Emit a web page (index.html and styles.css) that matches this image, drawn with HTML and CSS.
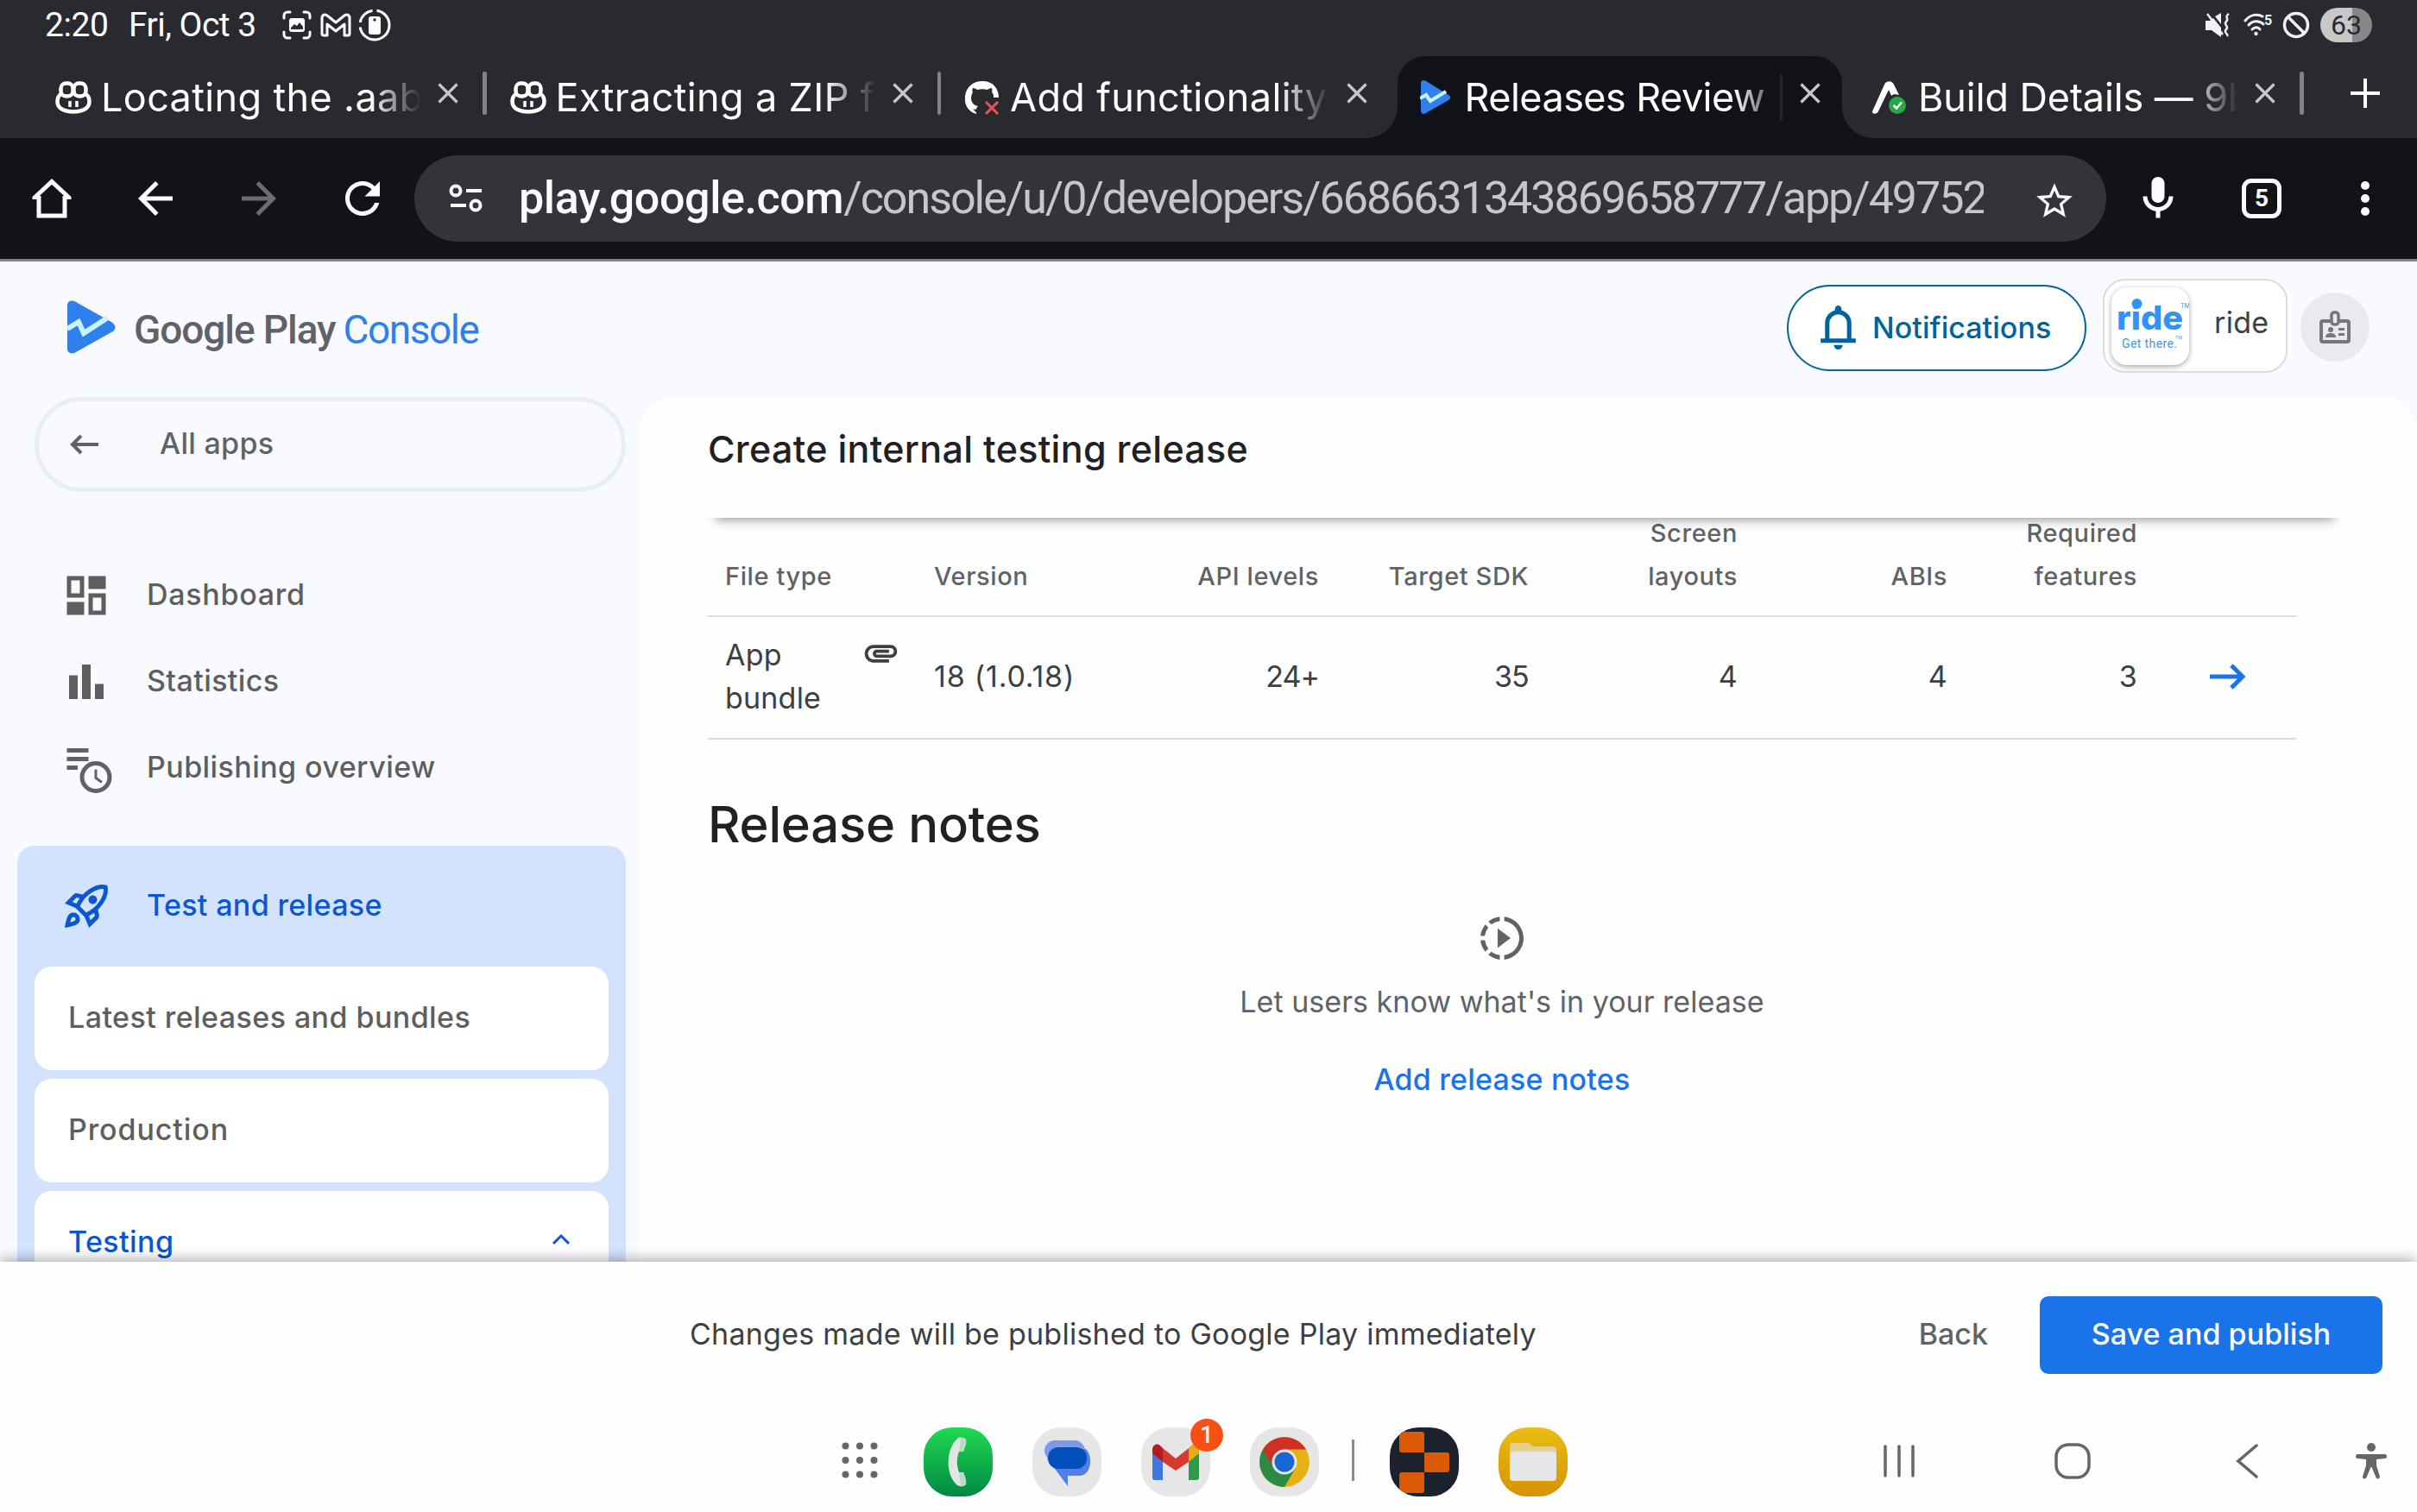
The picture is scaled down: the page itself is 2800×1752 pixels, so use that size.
FILE: index.html
```html
<!DOCTYPE html>
<html lang="en">
<head>
<meta charset="utf-8">
<title>Releases Review</title>
<link rel="stylesheet" href="styles.css">
</head>
<body>
<header class="status-bar">
  <span class="clock">2:20</span>
  <span class="date">Fri, Oct 3</span>
  <svg class="st-capture" viewBox="0 0 34 34"><g fill="none" stroke="#fff" stroke-width="3" stroke-linecap="round"><path d="M2 9V6a4 4 0 0 1 4-4h3M25 2h3a4 4 0 0 1 4 4v3M32 25v3a4 4 0 0 1-4 4h-3M9 32H6a4 4 0 0 1-4-4v-3"/></g><rect x="8" y="9" width="18" height="16" rx="3" fill="#fff"/><path d="M10 22v-2l4-4 3 2 3-4 4 5v3z" fill="#292a2f"/></svg>
  <svg class="st-mail" viewBox="0 0 36 28"><path d="M2 24V6c0-4 4-5 6-3l10 8 10-8c2-2 6-1 6 3v18q0 2-2 2h-4V13L18 21 8 13v13H4q-2 0-2-2z" fill="none" stroke="#fff" stroke-width="3" stroke-linejoin="round"/></svg>
  <svg class="st-battery" viewBox="0 0 38 38"><path d="M21.500 2.200A17 17 0 1 1 2.200 21.500M2.200 16A17 17 0 0 1 16.500 2.200" fill="none" stroke="#fff" stroke-width="3"/><rect x="12" y="9" width="14" height="21" rx="3" fill="#fff"/><circle cx="19" cy="13" r="1.700" fill="#292a2f"/></svg>
  <span class="spacer"></span>
  <svg class="st-mute" viewBox="0 0 30 30"><path d="M0 10h5l4-3 9 11v11L7 21H0zM11 5l7-4v13z" fill="#f0f0f2"/><path d="M2 2l18 24M27 2c-6 4 1 5-3 9s4 5 0 9 3 5 1 8" fill="none" stroke="#f0f0f2" stroke-width="2.500"/></svg>
  <svg class="st-wifi" viewBox="0 0 34 28"><g fill="none" stroke="#f0f0f2" stroke-width="3" stroke-linecap="round"><path d="M2 9C8 1 17 1 22 4M6 14c4-5 12-6 17-1M10 19c3-3 7-3 9 0"/></g><circle cx="14.500" cy="24" r="2.200" fill="#f0f0f2"/><text x="24" y="14" class="wifi-gen">5</text></svg>
  <svg class="st-block" viewBox="0 0 32 32"><circle cx="16" cy="16" r="13.500" fill="none" stroke="#f0f0f2" stroke-width="3.500"/><path d="M6.500 6.500l19 19" stroke="#f0f0f2" stroke-width="3.500"/></svg>
  <span class="battery">63</span>
</header>

<nav class="tab-strip">
  <div class="tab">
    <svg class="favicon" viewBox="0 0 42 42"><use href="#copilot"/></svg>
    <span class="tab-title t1">Locating the .aab</span>
    <svg class="close" viewBox="0 0 24 24"><path d="M1.500 1.500l21 21M22.500 1.500l-21 21"/></svg><i class="sep"></i>
  </div>
  <div class="tab">
    <svg class="favicon" viewBox="0 0 42 42"><use href="#copilot"/></svg>
    <span class="tab-title t2">Extracting a ZIP fi</span>
    <svg class="close" viewBox="0 0 24 24"><path d="M1.500 1.500l21 21M22.500 1.500l-21 21"/></svg><i class="sep"></i>
  </div>
  <div class="tab">
    <svg class="favicon" viewBox="0 0 42 42"><path d="M14 38.500v-4c-5 1-6-2-7-3.500M14 40C4 37 0 29 1 20 2 9 10 2 21 2c12 0 19 8 19 19h-6c0-3 0-4-2-6 1-2 0-4 0-5-2 0-4 1-5 2-4-1-8-1-12 0-1-1-3-2-5-2-1 2-1 4 0 5-4 6-2 15 6 16-1 1-2 2-2 4z" fill="#fff"/><path d="M25 26l14 14M39 26L25 40" stroke="#f0505c" stroke-width="3"/></svg>
    <span class="tab-title t3">Add functionality</span>
    <svg class="close" viewBox="0 0 24 24"><path d="M1.500 1.500l21 21M22.500 1.500l-21 21"/></svg>
  </div>
  <div class="tab active">
    <svg class="favicon" viewBox="0 0 42 42"><path d="M1 5c0-4 3-5 6-3l26 16c3 2 3 4 0 6L7 39c-3 2-6 1-6-3z" fill="#2f7fec"/><path d="M0 22l7-4 5 7L30 14" fill="none" stroke="#c7f4ff" stroke-width="4"/></svg>
    <span class="tab-title t4">Releases Review |</span>
    <svg class="close" viewBox="0 0 24 24"><path d="M1.500 1.500l21 21M22.500 1.500l-21 21"/></svg>
  </div>
  <div class="tab">
    <svg class="favicon" viewBox="0 0 42 42"><path d="M0 37L14 6c2-5 9-5 11 0l6 12c-4-1-7-1-9 1l-3-7L7 37c-2 4-8 3-7 0z" fill="#fff"/><circle cx="29" cy="30" r="10" fill="#28a745"/><path d="M24.500 30l3.500 3.500 6-7" fill="none" stroke="#fff" stroke-width="2.500"/></svg>
    <span class="tab-title t5">Build Details — 9b</span>
    <svg class="close" viewBox="0 0 24 24"><path d="M1.500 1.500l21 21M22.500 1.500l-21 21"/></svg><i class="sep"></i>
  </div>
  <svg class="new-tab" viewBox="0 0 34 34"><path d="M17 0v34M0 17h34" stroke="#fff" stroke-width="4"/></svg>
</nav>

<div class="toolbar">
  <div class="tool"><svg width="46" height="46" viewBox="0 0 46 46"><path d="M3 24v-2L23 3.500 43 22v2M8 20v23h30V20" fill="none" stroke="#fcf9ff" stroke-width="5"/></svg></div>
  <div class="tool"><svg width="60" height="60" viewBox="0 0 24 24"><path d="M20 11H7.830l5.590-5.590L12 4l-8 8 8 8 1.410-1.410L7.830 13H20z" fill="#fcf9ff"/></svg></div>
  <div class="tool"><svg width="60" height="60" viewBox="0 0 24 24"><path d="M12 4l-1.410 1.410L16.170 11H4v2h12.170l-5.580 5.590L12 20l8-8z" fill="#6c6b70"/></svg></div>
  <div class="tool"><svg width="60" height="60" viewBox="0 0 24 24"><path d="M17.650 6.350A7.960 7.960 0 0 0 12 4c-4.420 0-7.990 3.580-7.990 8s3.570 8 7.990 8c3.730 0 6.840-2.550 7.730-6h-2.080A5.990 5.990 0 0 1 12 18c-3.310 0-6-2.690-6-6s2.690-6 6-6c1.660 0 3.140.69 4.220 1.780L13 11h7V4z" fill="#fcf9ff"/></svg></div>
  <div class="omnibox">
    <svg class="tune" viewBox="0 0 40 34"><g fill="none" stroke="#fcf9ff" stroke-width="4"><circle cx="8" cy="8" r="5.500"/><circle cx="31" cy="25" r="5.500"/><path d="M20 8h18M2 25h18"/></g></svg>
    <div class="url"><span class="host">play.google.com</span><span class="path">/console/u/0/developers/6686631343869658777/app/49752</span></div>
    <svg class="star" viewBox="0 0 24 24"><path d="M22 9.240l-7.190-.62L12 2 9.190 8.630 2 9.240l5.460 4.730L5.820 21 12 17.270 18.180 21l-1.630-7.030zM12 15.400l-3.760 2.270 1-4.280-3.320-2.880 4.380-.38L12 6.100l1.710 4.040 4.380.38-3.320 2.880 1 4.280z" fill="#fcf9ff"/></svg>
  </div>
  <div class="tool"><svg width="60" height="60" viewBox="0 0 24 24"><path d="M12 14c1.660 0 3-1.340 3-3V5c0-1.660-1.340-3-3-3S9 3.340 9 5v6c0 1.660 1.340 3 3 3zm5-3c0 2.760-2.240 5-5 5s-5-2.240-5-5H5c0 3.530 2.610 6.430 6 6.920V21h2v-3.080c3.390-.49 6-3.390 6-6.920z" fill="#fcf9ff"/></svg></div>
  <div class="tool"><span class="tab-count">5</span></div>
  <div class="tool"><svg width="10" height="40" viewBox="0 0 10 40"><g fill="#fcf9ff"><circle cx="5" cy="5" r="5"/><circle cx="5" cy="20" r="5"/><circle cx="5" cy="35" r="5"/></g></svg></div>
</div>

<div class="app">
  <div class="app-header">
    <svg class="logo" viewBox="0 0 56 62"><path d="M0 6C0 1 5-1 10 2l41 23c6 4 6 9 0 12L10 60c-5 3-10 1-10-4z" fill="#2f7fec"/><path d="M0 33l13-8 6 13 28-18" fill="none" stroke="#c7f4ff" stroke-width="6"/></svg>
    <span class="brand">Google Play</span><span class="brand-sub">Console</span>
    <span class="spacer"></span>
    <button class="notifications"><svg width="61" height="61" viewBox="0 0 24 24"><path fill="#00639b" d="M4 19v-2h2v-7q0-2.075 1.250-3.690Q8.500 4.700 10.500 4.200v-.7q0-.62.440-1.060Q11.380 2 12 2t1.060.44q.44.440.44 1.060v.7q2 .5 3.250 2.110Q18 7.930 18 10v7h2v2Zm8 3q-.83 0-1.410-.59Q10 20.830 10 20h4q0 .83-.59 1.410Q12.830 22 12 22Zm-4-5h8v-7q0-1.650-1.180-2.830Q13.650 6 12 6q-1.650 0-2.830 1.170Q8 8.350 8 10Z"/></svg><span>Notifications</span></button>
    <div class="account">
      <svg class="account-logo" viewBox="0 0 90 90"><g fill="#2f93fa"><text class="ride-word" x="6" y="49" textLength="77" lengthAdjust="spacingAndGlyphs">ride</text><circle cx="29.500" cy="19" r="6"/></g><text class="ride-tm" x="80" y="24">TM</text><text class="ride-tag" x="12" y="70" textLength="64">Get there.</text><text class="ride-tm2" x="74" y="60">TM</text></svg>
      <span>ride</span>
    </div>
    <div class="avatar"><svg width="36" height="38" viewBox="0 0 36 38"><rect x="2" y="12" width="32" height="24" rx="2" fill="none" stroke="#757679" stroke-width="4"/><rect x="14" y="2" width="8" height="14" rx="3" fill="#e8eaed" stroke="#757679" stroke-width="3.500"/><circle cx="13" cy="22" r="3" fill="#757679"/><path d="M7 31q0-5 6-5t6 5zM22 20h7v3h-7zM22 26h7v3h-7z" fill="#757679"/></svg></div>
  </div>

  <div class="app-body">
    <aside class="sidebar">
      <a class="all-apps"><svg width="33" height="24" viewBox="0 0 33 24"><path d="M33 12H4M13 2L3 12l10 10" fill="none" stroke="#5f6368" stroke-width="4"/></svg><span>All apps</span></a>
      <a class="nav-item"><svg class="nav-icon" viewBox="0 0 24 24"><path fill="#5e5e5e" fill-rule="evenodd" d="M3 3h8v10H3zM5 5v6h4V5zM13 3h8v6h-8zM13 11h8v10h-8zM15 13v6h4v-6zM3 15h8v6H3z"/></svg><span class="dash">Dashboard</span></a>
      <a class="nav-item"><svg class="nav-icon" viewBox="0 0 24 24"><path fill="#5e5e5e" d="M4 9h4v11H4zm12 4h4v7h-4zM10 4h4v16h-4z"/></svg><span class="stats">Statistics</span></a>
      <a class="nav-item"><svg class="nav-icon pub" viewBox="0 0 60 60"><path fill="#5f6368" d="M7.500 5h25v5h-25zM7.500 15h25v5h-25zM7.500 25H20v5H7.500z"/><circle cx="41" cy="38.500" r="16" fill="#f9faff" stroke="#5f6368" stroke-width="5"/><path d="M41 29.500v10l7 5" fill="none" stroke="#5f6368" stroke-width="3"/></svg><span>Publishing overview</span></a>
      <section class="group">
        <div class="group-head"><svg class="nav-icon" viewBox="0 0 24 24"><path fill="#0b57d0" fill-rule="evenodd" d="M6 15c-.83 0-1.580.34-2.120.88C2.700 17.060 2 22 2 22s4.940-.7 6.120-1.880A3 3 0 0 0 6 15zm.71 3.710c-.28.28-2.170.76-2.170.76s.47-1.880.76-2.170c.17-.19.42-.3.7-.3.55 0 1 .45 1 1 0 .28-.11.53-.29.710zM17.420 13.650c6.360-6.360 4.240-11.310 4.240-11.310s-4.950-2.120-11.310 4.240l-2.490-.5c-.65-.13-1.330.08-1.810.55L2 10.690l5 2.140L11.170 17l2.140 5 4.050-4.050c.47-.47.68-1.150.55-1.810zM7.410 10.830l-1.910-.82 1.970-1.970 1.440.29c-.57.83-1.080 1.700-1.500 2.500zm6.580 7.670l-.82-1.910c.8-.42 1.670-.93 2.490-1.500l.29 1.440zM16 12.240c-1.320 1.320-3.380 2.400-4.040 2.730l-2.930-2.930c.32-.65 1.400-2.710 2.730-4.040 4.680-4.680 8.230-3.990 8.230-3.990s.69 3.550-3.990 8.230zM15 11c1.100 0 2-.9 2-2s-.9-2-2-2-2 .9-2 2 .9 2 2 2z"/></svg><span>Test and release</span></div>
        <a class="card"><span>Latest releases and bundles</span></a>
        <a class="card"><span class="prod">Production</span></a>
        <a class="card open"><span>Testing</span><svg width="22" height="14" viewBox="0 0 22 14"><path d="M2 12l9-9 9 9" fill="none" stroke="#0b57d0" stroke-width="3"/></svg></a>
      </section>
    </aside>

    <main class="main">
      <div class="main-head"><h1>Create internal testing release</h1></div>
      <div class="grid-row head">
        <div>File type</div><div>Version</div><div class="num">API levels</div><div class="num">Target SDK</div><div class="num">Screen<br>layouts</div><div class="num">ABIs</div><div class="num">Required<br>features</div><div></div>
      </div>
      <div class="grid-row">
        <div class="bundle"><span>App<br>bundle</span><svg width="45" height="45" viewBox="0 0 24 24"><path fill="#3c4043" d="M2 12.500C2 9.460 4.460 7 7.500 7H18c2.210 0 4 1.790 4 4s-1.790 4-4 4H9.500C8.120 15 7 13.880 7 12.500S8.120 10 9.500 10H17v2H9.410c-.55 0-.55 1 0 1H18c1.100 0 2-.9 2-2s-.9-2-2-2H7.500C5.570 9 4 10.570 4 12.500S5.570 16 7.500 16H17v2H7.500C4.460 18 2 15.540 2 12.500z"/></svg></div>
        <div class="ver">18 (1.0.18)</div><div class="num api">24+</div><div class="num sdk">35</div><div class="num">4</div><div class="num">4</div><div class="num">3</div>
        <div class="go"><svg width="41" height="30" viewBox="0 0 41 30"><path d="M0 15h37M25 2l13 13-13 13" fill="none" stroke="#1a73e8" stroke-width="5"/></svg></div>
      </div>
      <h2>Release notes</h2>
      <div class="empty">
        <svg width="60" height="60" viewBox="0 0 24 24"><path fill="#5f6368" d="M10 7.500v9l6-4.500zM11 4.070V2.050c-2.010.2-3.840 1-5.320 2.210L7.100 5.690A7.900 7.900 0 0 1 11 4.070zM5.690 7.100L4.260 5.680C3.050 7.160 2.250 8.990 2.050 11h2.020c.18-1.460.76-2.790 1.620-3.900zM4.070 13H2.050c.2 2.010 1 3.840 2.210 5.320l1.430-1.430A7.900 7.900 0 0 1 4.070 13zm1.610 6.740C7.160 20.950 9 21.750 11 21.950v-2.020c-1.460-.18-2.790-.76-3.900-1.620zM22 12c0 5.160-3.920 9.420-8.950 9.950v-2.020C16.970 19.410 20 16.050 20 12s-3.030-7.410-6.950-7.930V2.050C18.080 2.580 22 6.840 22 12z"/></svg>
        <p>Let users know what's in your release</p>
        <a>Add release notes</a>
      </div>
    </main>
  </div>
</div>

<footer class="action-bar">
  <p>Changes made will be published to Google Play immediately</p>
  <span class="spacer"></span>
  <a class="back">Back</a>
  <button class="publish">Save and publish</button>
</footer>

<div class="taskbar">
  <svg class="drawer" viewBox="0 0 42 42"><g fill="#666"><circle cx="4.500" cy="4.500" r="4"/><circle cx="21" cy="4.500" r="4"/><circle cx="37.500" cy="4.500" r="4"/><circle cx="4.500" cy="21" r="4"/><circle cx="21" cy="21" r="4"/><circle cx="37.500" cy="21" r="4"/><circle cx="4.500" cy="37.500" r="4"/><circle cx="21" cy="37.500" r="4"/><circle cx="37.500" cy="37.500" r="4"/></g></svg>
  <div class="dock-icon phone"><svg viewBox="0 0 80 80"><path d="M40 12c3-1 7 0 9 2 1 4-1 9-3 14h-5c-3 8-3 16 0 24h5c2 5 4 10 3 14-2 3-7 3-10 1C25 55 25 25 40 12z" fill="#e4e6e5"/><path d="M43 12c5 0 7 2 6 5l-3 11h-5zM41 52h5l3 11c1 3-2 5-6 5z" fill="#b6ddc4"/></svg></div>
  <div class="dock-icon"><svg viewBox="0 0 80 80"><path d="M26 15h23c8 0 13 8 13 16v8H30c-10 0-16-5-16-12 0-6 5-12 12-12z" fill="#7b9be6"/><path d="M62 25c8 8 7 30-7 31H41v12L17 36c6-8 30-11 45-11z" fill="#5080e8"/><rect x="18" y="23" width="45" height="25" rx="12" fill="#004fbb"/></svg></div>
  <div class="dock-icon"><svg viewBox="0 0 80 80"><path d="M13 27l12 10v24h-9q-3 0-3-3z" fill="#3f78dc"/><path d="M67 27L55 37v24h9q3 0 3-3z" fill="#309a4b"/><path d="M55 24l3-3c4-3 9 0 9 5v4L55 40z" fill="#e5ad12"/><path d="M25 24v16l15 10 15-10V24L40 36z" fill="#d33b2f"/><path d="M13 26c0-6 6-9 10-4l2 2v16L13 30z" fill="#b31c1c"/></svg><b class="badge">1</b></div>
  <div class="dock-icon"><svg viewBox="0 0 80 80"><circle cx="40" cy="40" r="29" fill="#e5b114"/><path d="M40 40L15 25.500A29 29 0 0 1 65 25.500H40z" fill="#cf3026"/><path d="M40 40v0L15 25.500A29 29 0 0 0 40 69l13-22z" fill="#2c8a44"/><path d="M15 25.500L27 46l13-20.500z" fill="#cf3026"/><circle cx="40" cy="40" r="14.500" fill="#e6e6e6"/><circle cx="40" cy="40" r="11.500" fill="#1967d2"/></svg></div>
  <i class="dock-sep"></i>
  <div class="dock-icon term"><svg viewBox="0 0 80 80"><g fill="#dc5a06"><path d="M11 9q0-4 4-4h22q3 0 3 3v21H14q-3 0-3-3zM40 29h26q3 0 3 3v17q0 3-3 3H40zM14 52h26v21q0 3-3 3H15q-4 0-4-4V55q0-3 3-3z"/></g></svg></div>
  <div class="dock-icon files"><svg viewBox="0 0 80 80"><path d="M13 22q0-4 4-4h18l5 4h23q4 0 4 4v10H13z" fill="#e5cf8c"/><rect x="13" y="28" width="54" height="34" rx="4" fill="#e6e6e6"/></svg></div>
  <span class="spacer"></span>
  <svg class="recents" viewBox="0 0 36 38"><path d="M2 2v34M18 2v34M34 2v34" stroke="#666" stroke-width="3.500" stroke-linecap="round"/></svg>
  <svg class="home" viewBox="0 0 42 42"><rect x="2" y="2" width="38" height="38" rx="14" fill="none" stroke="#666" stroke-width="3.500"/></svg>
  <svg class="nav-back" viewBox="0 0 26 40"><path d="M24 2L3 20l21 18" fill="none" stroke="#666" stroke-width="3.500" stroke-linecap="round"/></svg>
  <svg class="a11y" viewBox="0 0 36 42"><g fill="#666"><circle cx="18" cy="5" r="5"/><path d="M2.500 13h31a2.500 2.500 0 0 1 0 5L24 19v7l4 13c0 3-4 3-4.500 1L18.500 28h-1l-5 12c-1 2-5 2-4.500-1l4-13v-7l-9.500-1a2.500 2.500 0 0 1 0-5z"/></g></svg>
</div>

<svg class="defs" aria-hidden="true"><symbol id="copilot" viewBox="0 0 42 42"><g fill="none" stroke="#fff" stroke-width="4.500"><rect x="6.500" y="4.500" width="14" height="15" rx="6"/><rect x="21.500" y="4.500" width="14" height="15" rx="6"/><path d="M6.500 17c-3 2-4 5-4 9 0 8 9 11.500 18.500 11.500S39.500 34 39.500 26c0-4-1-7-4-9" /><path d="M17 25v7M25 25v7" stroke-width="3.500"/></g></symbol></svg>
</body>
</html>
```
FILE: styles.css
```css
* { box-sizing: border-box; }
body { margin: 0; width: 2800px; height: 1752px; overflow: hidden; display: flex; flex-direction: column; background: #fefefe; font-family: Inter, Roboto, sans-serif; font-size: 34px; color: #3c4043; }
svg { display: block; flex: none; }
p, h1, h2 { margin: 0; }
button { font: inherit; border: 0; }
span { white-space: nowrap; }
.spacer { flex: 1; }
.defs { position: absolute; width: 0; height: 0; }

/* Status bar */
.status-bar { height: 65px; flex: none; padding: 0 52px 8px 52px; display: flex; align-items: center; background: #292a2f; color: #fff; font: 450 39px Roboto, sans-serif; }
.clock { width: 97px; letter-spacing: -.4px; }
.date { width: 178px; letter-spacing: -.5px; }
.st-capture { width: 34px; height: 34px; margin-right: 10px; }
.st-mail { width: 36px; height: 28px; margin-right: 8px; }
.st-battery { width: 38px; height: 38px; }
.st-mute { width: 30px; height: 30px; margin-right: 14px; }
.st-wifi { width: 34px; height: 28px; margin-right: 11px; }
.wifi-gen { font: 700 16px Roboto, sans-serif; fill: #f0f0f2; }
.st-block { width: 32px; height: 32px; margin-right: 12px; }
.battery { width: 60px; height: 40px; border-radius: 20px; text-align: center; font-size: 32px; line-height: 41px; color: #292a2f; background: linear-gradient(90deg, #c8c8c8 62%, #868789 62%); }

/* Tabs */
.tab-strip { height: 95px; flex: none; padding-left: 38px; display: flex; background: #292a2f; color: #fff; }
.tab { width: 526.5px; flex: none; padding-left: 26px; display: flex; align-items: center; }
.tab.active { width: 515px; margin: 0 9.5px 0 1px; position: relative; background: #121318; border-radius: 32px 32px 0 0; }
.tab.active::before, .tab.active::after { content: ""; position: absolute; bottom: 0; width: 36px; height: 36px; }
.tab.active::before { left: -36px; background: radial-gradient(circle at 0 0, transparent 35.500px, #121318 36px); }
.tab.active::after { right: -36px; background: radial-gradient(circle at 100% 0, transparent 35.500px, #121318 36px); }
.favicon { width: 42px; height: 42px; margin-right: 11px; }
.tab-title { width: 371px; margin-right: 19px; overflow: hidden; font-size: 45px; line-height: 95px; letter-spacing: .35px; -webkit-mask-image: linear-gradient(90deg, #000 84%, transparent); mask-image: linear-gradient(90deg, #000 84%, transparent); }
.t4 { letter-spacing: -.55px; margin-left: -1px; margin-right: 17px; }
.t5 { letter-spacing: -.1px; }
.close { width: 24px; height: 24px; margin-top: -9px; stroke: #c8c6cc; stroke-width: 3.200px; }
.sep { width: 4.500px; height: 50px; margin: -9px 0 0 28px; border-radius: 2px; background: #83828c; }
.new-tab { width: 34px; height: 34px; margin: 26px 0 0 53px; }

/* Toolbar */
.toolbar { height: 143px; flex: none; display: flex; align-items: center; background: #121318; border-bottom: 3px solid #838189; }
.tool { width: 120px; display: flex; justify-content: center; }
.omnibox { flex: none; width: 1960px; height: 100px; padding-left: 40px; display: flex; align-items: center; border-radius: 50px; background: #333438; }
.tune { width: 40px; height: 34px; }
.url { width: 1701px; margin-left: 37px; padding-left: 4px; overflow: hidden; white-space: nowrap; font: 400 52px/100px Roboto, sans-serif; color: #c8c5d0; }
.host { font-weight: 500; color: #fcf9ff; letter-spacing: -.4px; }
.path { letter-spacing: -2.030px; }
.star { width: 50px; height: 50px; margin: 5px 0 0 57px; }
.tab-count { width: 46px; height: 46px; border: 5px solid #fcf9ff; border-radius: 11px; text-align: center; font: 700 28px/36px Roboto, sans-serif; color: #fcf9ff; }

/* Console */
.app { height: 1159px; flex: none; overflow: hidden; background: #f9faff; }
.app-header { height: 157px; padding: 0 55px 5px 78px; display: flex; align-items: center; }
.logo { width: 56px; height: 62px; }
.brand { margin: 6px 0 0 21px; font: 500 46px Roboto, sans-serif; letter-spacing: -1.090px; color: #5f6368; }
.brand-sub { margin: 6px 0 0 9px; font: 400 46px Roboto, sans-serif; letter-spacing: -1.450px; color: #2f7fec; }
.notifications { width: 347px; height: 100px; padding: 0 0 0 27px; display: flex; align-items: center; border: 2.500px solid #00639b; border-radius: 50px; background: #fff; color: #00639b; font-weight: 500; letter-spacing: .05px; margin: 1px 19px 0 0; }
.notifications span { margin-left: 9px; }
.notifications svg { margin-top: -1px; }
.account { width: 214px; height: 109px; padding-left: 8px; display: flex; align-items: center; border: 2.500px solid #dadce0; border-radius: 26px; background: #fff; margin: -3px 15px 0 0; }
.account span { margin: -8px 0 0 29px; letter-spacing: .3px; }
.account-logo { width: 90px; height: 90px; border-radius: 18px; background: #fff; box-shadow: 0 2px 6px rgba(0, 0, 0, .35); }
.ride-word { font: 800 38px Inter, sans-serif; }
.ride-tm { font: 400 7px Inter, sans-serif; fill: #2f93fa; }
.ride-tm2 { font: 400 5px Inter, sans-serif; fill: #2f93fa; }
.ride-tag { font: 400 14px Roboto, sans-serif; fill: #4a93d8; }
.avatar { width: 80px; height: 80px; margin-top: -1px; display: flex; align-items: center; justify-content: center; border-radius: 50%; background: #e8eaed; }
.app-body { display: flex; height: 1002px; }

.sidebar { width: 740px; flex: none; font-weight: 500; color: #5e5e5e; letter-spacing: .43px; }
.all-apps { width: 685px; height: 110px; margin: 0 0 68px 40px; padding: 0 0 0 36px; display: flex; align-items: center; border: 5px solid #e8eef7; border-radius: 55px; color: #5f6368; letter-spacing: .3px; }
.all-apps span { margin: -3px 0 0 71px; }
.nav-item { height: 100px; padding-left: 70px; display: flex; align-items: center; }
.nav-item span, .group-head span { margin: 1px 0 0 40px; }
.nav-icon { width: 60px; height: 60px; margin-top: 4px; }
.nav-icon.pub { margin-top: 7px; }
.dash { letter-spacing: .7px; }
.stats { letter-spacing: .4px; }
.group { width: 705px; margin: 42px 0 0 20px; padding: 0 20px; border-radius: 20px 20px 0 0; background: #d3e3fd; }
.group-head { height: 140px; padding-left: 30px; display: flex; align-items: center; color: #0b57d0; letter-spacing: .35px; }
.group-head .nav-icon { margin-top: 0; }
.group-head span { margin-top: -4px; }
.card { height: 120px; margin-bottom: 10px; padding: 0 44px 3px 39px; display: flex; align-items: center; justify-content: space-between; border-radius: 20px; background: #fff; }
.prod { letter-spacing: .9px; }
.card.open { color: #0b57d0; }
.card.open svg { margin-top: -5px; }

.main { width: 2060px; border-radius: 40px 40px 0 0; padding: 0 88px 0 80px; background: #fefefe; }
.main-head { height: 140px; padding-bottom: 21px; display: flex; align-items: center; position: relative; z-index: 1; background: #fefefe; box-shadow: 0 11px 12px -9px rgba(0, 0, 0, .42); clip-path: inset(0 -10px -30px -10px); }
.main-head { clip-path: polygon(0 0, 100% 0, 100% 100%, calc(100% + 10px) 100%, calc(100% + 10px) calc(100% + 30px), -10px calc(100% + 30px), -10px 100%, 0 100%); }
h1 { font-size: 43px; font-weight: 500; letter-spacing: .3px; color: #202124; }
.grid-row { width: 1840px; height: 142px; display: grid; grid-template-columns: 241px 243px 242px 243px 242px 243px 220px 166px; align-items: center; padding-bottom: 3px; border-bottom: 2.500px solid #dadce0; line-height: 50px; }
.grid-row > div { padding: 0 19px 0 21px; letter-spacing: .2px; }
.grid-row > div:first-child { padding: 0 18px 0 20px; }
.grid-row.head { height: 123px; margin-top: -8px; align-items: end; padding-bottom: 20px; font-size: 29px; font-weight: 500; color: #5f6368; }
.grid-row.head > div { letter-spacing: .6px; }
.grid-row > div.num { text-align: right; padding-right: 18px; }
.bundle { display: flex; justify-content: space-between; }
.grid-row > .ver { letter-spacing: .8px; }
.grid-row > .api { letter-spacing: -1px; }
.grid-row > .sdk { letter-spacing: -.8px; }
.go { display: flex; justify-content: center; }
.grid-row > .go { padding: 0 0 0 6px; }
h2 { margin: 58px 0 0; font-size: 58px; font-weight: 500; line-height: 80px; letter-spacing: -.2px; color: #202124; }
.empty { width: 1840px; padding-top: 62px; display: flex; flex-direction: column; align-items: center; color: #5f6368; }
.empty p { margin-top: 24px; line-height: 40px; letter-spacing: .03px; }
.empty a { margin-top: 50px; line-height: 40px; font-weight: 500; letter-spacing: .2px; color: #1a73e8; }

/* Publish bar */
.action-bar { height: 170px; flex: none; padding: 0 40px 0 799px; display: flex; align-items: center; position: relative; background: #fefefe; box-shadow: 0 -4px 14px -1px rgba(0, 0, 0, .32); clip-path: inset(-30px 0 0 0); }
.action-bar p { letter-spacing: .25px; margin-top: -4px; }
.back { margin: -3px 60px 0 0; font-weight: 500; color: #5f6368; }
.publish { width: 397px; height: 90px; border-radius: 10px; background: #1a73e8; color: #fff; font-weight: 500; letter-spacing: .05px; padding: 0 0 3px; }

/* Taskbar */
.taskbar { height: 120px; padding: 4px 35px 0 975px; display: flex; align-items: center; background: #fefefe; }
.drawer { width: 42px; height: 42px; margin: -4px 53px 0 0; }
.dock-icon { width: 80px; height: 80px; flex: none; margin-right: 46px; position: relative; border-radius: 33px; background: #e6e6e6; }
.dock-icon svg { width: 80px; height: 80px; }
.phone { background: linear-gradient(#1fdb50, #008744); }
.term { background: #1b222d; overflow: hidden; }
.files { background: linear-gradient(#e8be14, #d69200); }
.badge { position: absolute; left: 57px; top: -10px; width: 38px; height: 38px; border-radius: 50%; background: #f84f16; color: #fff; text-align: center; font: 500 27px/38px Roboto, sans-serif; }
.dock-sep { width: 2.500px; height: 48px; margin: -5px 41px 0 -8px; background: #8b8b8b; }
.recents { width: 36px; height: 38px; margin: -2px 162px 0 0; }
.home { width: 42px; height: 42px; margin: -2px 168px 0 0; }
.nav-back { width: 26px; height: 40px; margin: -2px 113px 0 0; }
.a11y { width: 36px; height: 42px; margin-top: -3px; }
```
